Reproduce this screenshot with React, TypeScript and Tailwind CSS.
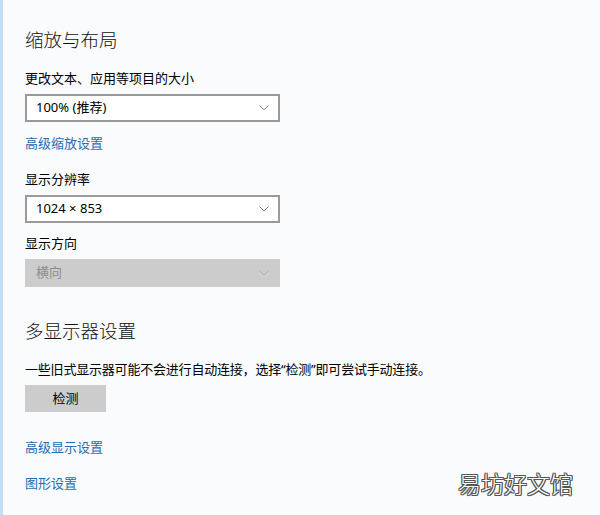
import React from "react";

const font = { fontFamily: '"Noto Sans", "Noto Sans CJK SC", sans-serif' };

function Chevron({ color }: { color: string }) {
  return (
    <svg width="10" height="6" viewBox="0 0 10 6" fill="none">
      <path d="M0.5 0.5 L5 5 L9.5 0.5" stroke={color} strokeWidth="1" />
    </svg>
  );
}

function Select({ value, disabled }: { value: string; disabled?: boolean }) {
  return (
    <div
      className={
        disabled
          ? "mt-[6px] w-[255px] h-[28px] bg-[#cccccc] flex items-center justify-between pl-[11px] pr-[11px] text-[13px] text-[#8c8c8c]"
          : "mt-[6px] w-[255px] h-[28px] border-2 border-[#9a9a9a] bg-white flex items-center justify-between pl-[9px] pr-[9px] text-[13px] text-black"
      }
    >
      <span>{value}</span>
      <Chevron color={disabled ? "#b0b0b0" : "#8a8a8a"} />
    </div>
  );
}

export default function App() {
  return (
    <div
      className="relative w-[600px] h-[515px] overflow-hidden bg-[#f9fbfd] border-l-[3px] border-[#c4def1] pl-[22px] pt-[26px] text-black"
      style={font}
    >
      <h1 className="text-[18.5px] leading-[28px] font-light text-[#111]">缩放与布局</h1>
      <div className="mt-[14px] text-[13px] leading-[20px]">更改文本、应用等项目的大小</div>
      <Select value="100% (推荐)" />
      <a className="block mt-[11px] text-[13px] leading-[20px] text-[#1f6db3]">高级缩放设置</a>

      <div className="mt-[16px] text-[13px] leading-[20px]">显示分辨率</div>
      <Select value="1024 × 853" />

      <div className="mt-[10px] text-[13px] leading-[20px]">显示方向</div>
      <Select value="横向" disabled />

      <h2 className="mt-[30px] text-[18.5px] leading-[28px] font-light text-[#111]">多显示器设置</h2>
      <p className="mt-[14px] text-[13px] leading-[20px] tracking-[-0.2px]">
        一些旧式显示器可能不会进行自动连接，选择“检测”即可尝试手动连接。
      </p>
      <button className="mt-[6px] w-[81px] h-[27px] bg-[#cccccc] text-[13px] text-black">检测</button>

      <a className="block mt-[25px] text-[13px] leading-[20px] text-[#1f6db3]">高级显示设置</a>
      <a className="block mt-[16px] text-[13px] leading-[20px] text-[#1f6db3]">图形设置</a>

      <div
        className="absolute left-[455px] top-[468px] text-[23px] leading-[30px] font-light text-white [text-shadow:1px_0_#555,-1px_0_#555,0_1px_#555,0_-1px_#555,1px_1px_#555,-1px_-1px_#555,1px_-1px_#555,-1px_1px_#555]"
        style={{ fontFamily: '"Noto Sans CJK SC", sans-serif' }}
      >
        易坊好文馆
      </div>
    </div>
  );
}
